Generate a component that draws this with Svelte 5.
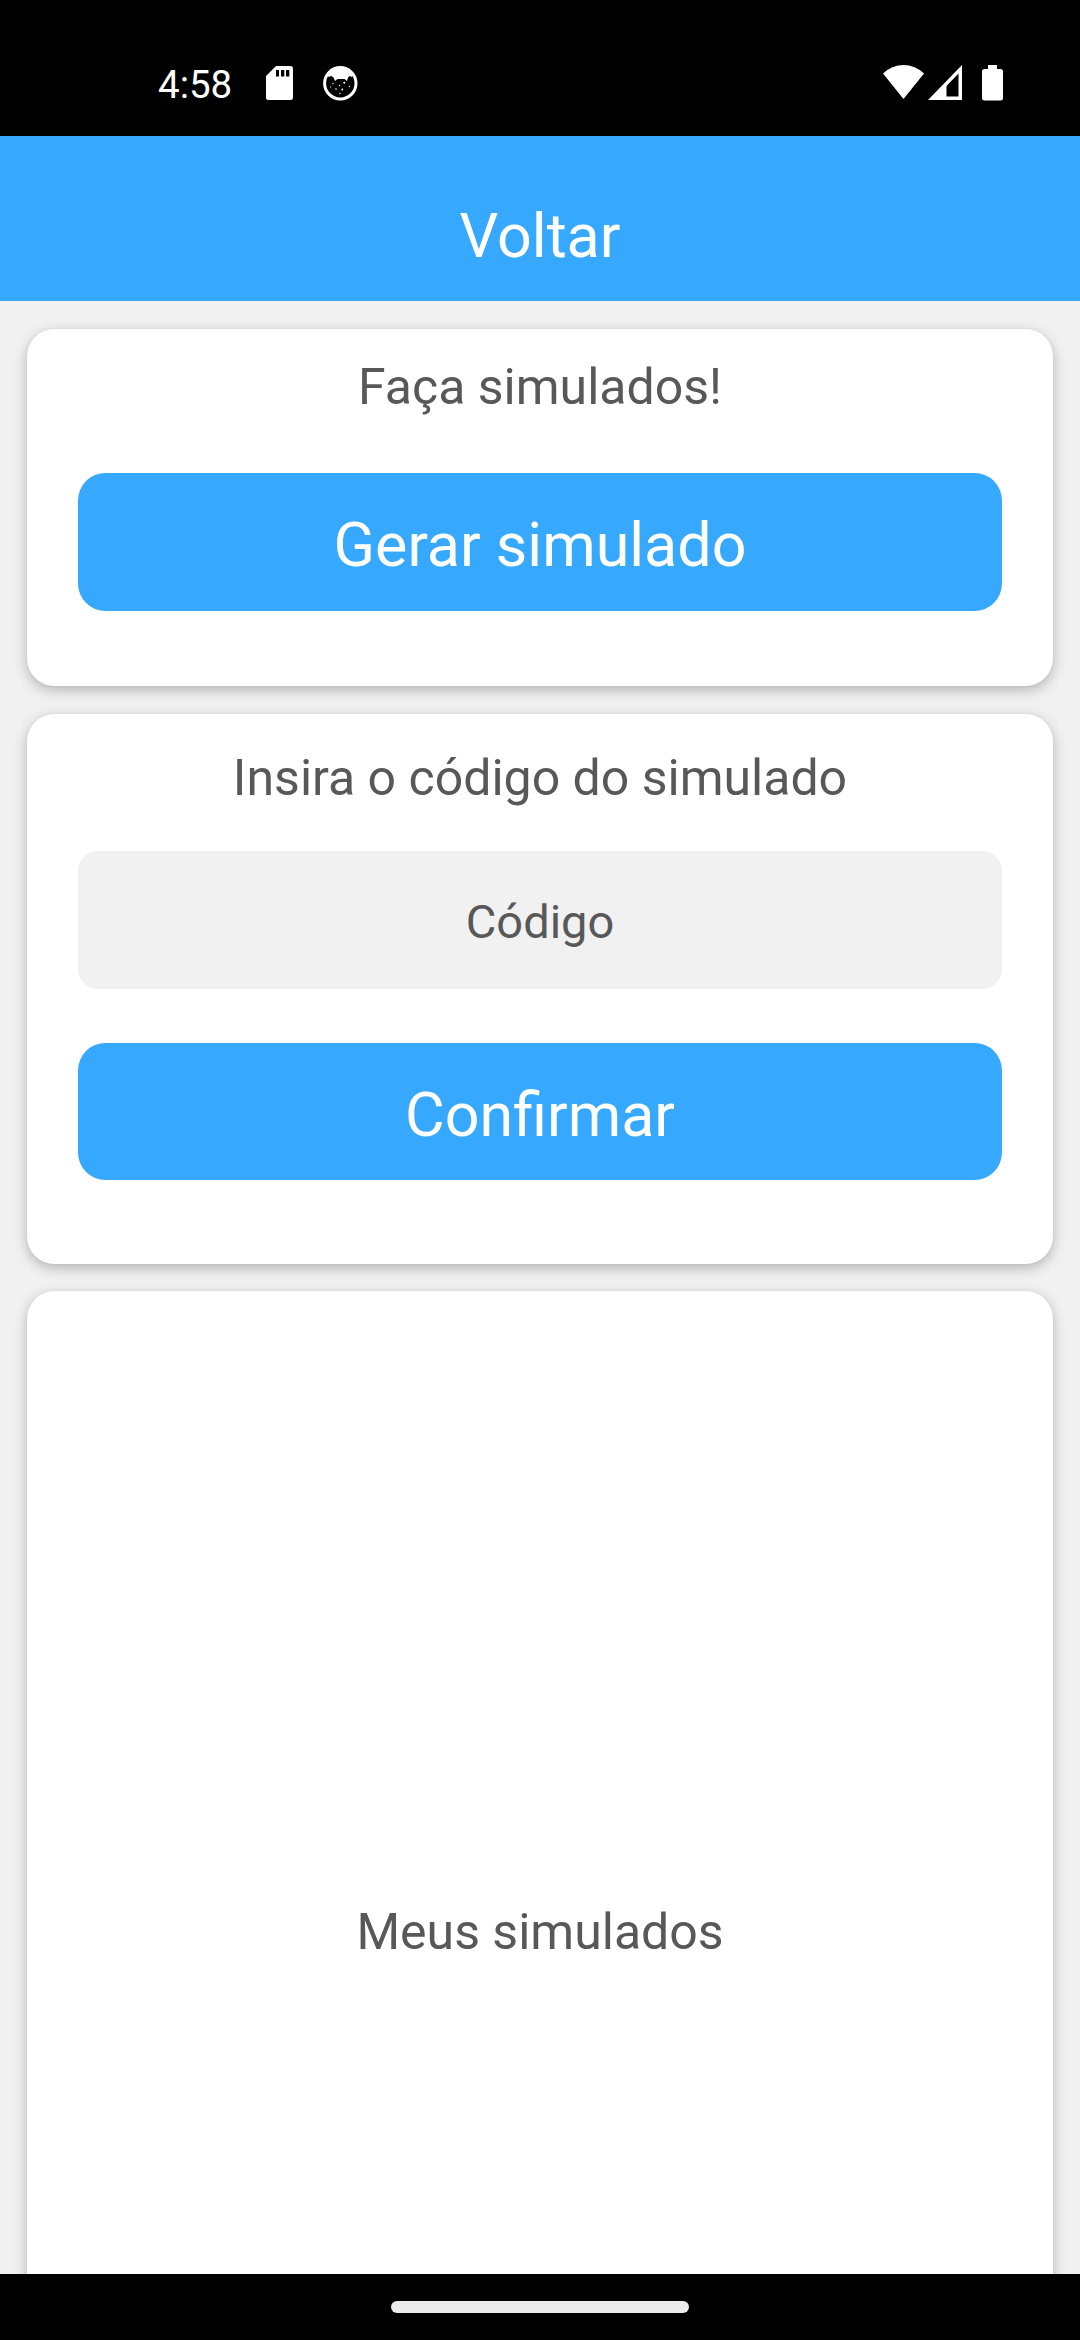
<script lang="ts">
    let code = $state('');
</script>

<div class="screen">
    <div class="status-bar">
        <span class="time">4:58</span>
        <svg class="sd" width="27" height="34" viewBox="0 0 27 34">
            <path
                fill="#fff"
                fill-rule="evenodd"
                d="M10 0H24.5Q27 0 27 2.5V31.5Q27 34 24.5 34H2.5Q0 34 0 31.5V10ZM10 4V10.5H13V4ZM15 4V10.5H18.3V4ZM20 4V10.5H23.3V4Z"
            />
        </svg>
        <svg class="face" width="36" height="36" viewBox="0 0 36 36">
            <circle cx="18.3" cy="18.3" r="15.7" fill="#000" stroke="#fff" stroke-width="3" />
            <path
                fill="#fff"
                d="M5 8Q10 2 18 2T31.5 8L30 12L27.5 11L26 12.5L25 16L22.500 14H15.5L13 16L11.5 12.5L9.5 11L6.5 12Z"
            />
            <g fill="#fff">
                <circle cx="11" cy="18.5" r="0.7" />
                <circle cx="22.3" cy="17.8" r="1" />
                <circle cx="17.5" cy="20.5" r="0.7" />
                <circle cx="8.5" cy="22" r="0.6" />
                <circle cx="27.5" cy="21.5" r="0.7" />
                <circle cx="14" cy="24" r="0.8" />
                <circle cx="20.3" cy="24.5" r="0.9" />
                <circle cx="18" cy="28.5" r="0.7" />
            </g>
        </svg>
        <div class="system-icons">
            <svg width="41" height="34" viewBox="0 0 41 34">
                <path fill="#fff" d="M0 8.5Q9 0 20.5 0T41 8.5L20.5 34Z" />
            </svg>
            <svg class="signal" width="34" height="35" viewBox="0 0 34 35">
                <path fill="#fff" fill-rule="evenodd" d="M34 0V35H0ZM30.5 8.5L18.5 21V31.5H30.5Z" />
            </svg>
            <svg class="battery" width="21" height="36" viewBox="0 0 21 36">
                <path
                    fill="#fff"
                    d="M6 0H15V4H18.5Q21 4 21 6.5V33Q21 35.5 18.5 35.5H2.5Q0 35.5 0 33V6.5Q0 4 2.5 4H6Z"
                />
            </svg>
        </div>
    </div>

    <header class="header">Voltar</header>

    <main class="content">
        <section class="card generate">
            <h2>Faça simulados!</h2>
            <button>Gerar simulado</button>
        </section>

        <section class="card enter-code">
            <h2>Insira o código do simulado</h2>
            <input type="text" placeholder="Código" bind:value={code} />
            <button>Confirmar</button>
        </section>

        <section class="card mine">
            <h2>Meus simulados</h2>
        </section>
    </main>

    <div class="nav-bar">
        <div class="handle"></div>
    </div>
</div>

<style>
    .screen {
        display: flex;
        flex-direction: column;
        width: 1080px;
        height: 2340px;
        overflow: hidden;
        background: #f1f1f1;
        font-family: Roboto, sans-serif;
    }

    .status-bar {
        display: flex;
        flex: none;
        align-items: flex-start;
        box-sizing: border-box;
        height: 136px;
        padding: 65px 77px 0 158px;
        background: #000;
        color: #fff;
    }

    .time {
        width: 108px;
        font-size: 38.5px;
        line-height: 40px;
    }

    .sd {
        margin-top: 1px;
    }

    .face {
        margin-left: 29px;
    }

    .system-icons {
        display: flex;
        align-items: flex-start;
        margin-left: auto;
    }

    .signal {
        margin-left: 4px;
    }

    .battery {
        margin-left: 20px;
    }

    .header {
        flex: none;
        box-sizing: border-box;
        height: 165px;
        padding-top: 60px;
        background: #36a9ff;
        color: #fff;
        font-size: 61px;
        line-height: 80px;
        text-align: center;
    }

    .content {
        display: flex;
        flex: 1;
        flex-direction: column;
        min-height: 0;
        gap: 28px;
        padding: 28px 27px 0;
        overflow: hidden;
    }

    .card {
        display: flex;
        flex: none;
        flex-direction: column;
        box-sizing: border-box;
        padding: 0 51px;
        border-radius: 27.5px;
        background: #fff;
        box-shadow:
            0 4px 13px rgba(0, 0, 0, 0.26),
            0 0 2px rgba(0, 0, 0, 0.05);
    }

    .generate {
        height: 357px;
        padding-top: 29px;
    }

    .generate button {
        height: 138px;
        margin-top: 57px;
        padding-top: 5px;
    }

    .enter-code {
        height: 550px;
        padding-top: 35px;
    }

    .enter-code input {
        margin-top: 44px;
    }

    .enter-code button {
        margin-top: 54px;
    }

    .mine {
        justify-content: center;
        height: 1282px;
        margin-top: -1px;
    }

    h2 {
        margin: 0;
        color: #585858;
        font-size: 50px;
        font-weight: 400;
        line-height: 58px;
        text-align: center;
    }

    button {
        box-sizing: border-box;
        height: 137px;
        padding: 7px 0 0;
        border: none;
        border-radius: 27.5px;
        background: #36a9ff;
        color: #fff;
        font-family: inherit;
        font-size: 61px;
    }

    input {
        box-sizing: border-box;
        width: 100%;
        height: 138px;
        padding: 2px 0 0;
        border: none;
        border-radius: 20px;
        background: #f1f1f1;
        color: #585858;
        font-family: inherit;
        font-size: 47px;
        text-align: center;
    }

    input::placeholder {
        color: #585858;
        opacity: 1;
    }

    .nav-bar {
        display: flex;
        flex: none;
        align-items: center;
        justify-content: center;
        height: 66px;
        background: #000;
    }

    .handle {
        width: 298px;
        height: 12px;
        border-radius: 6px;
        background: #ebebeb;
    }
</style>
